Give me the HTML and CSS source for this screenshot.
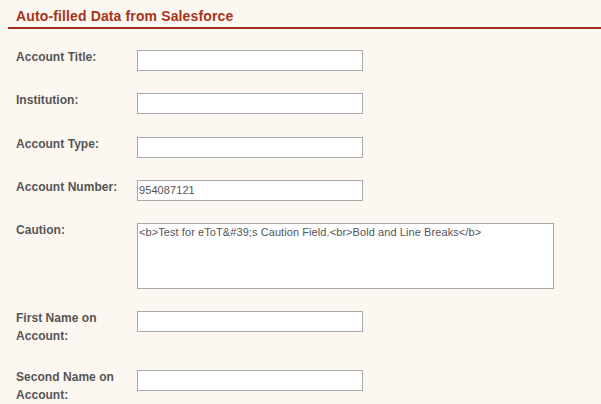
FILE: index.html
```html
<!DOCTYPE html>
<html>
<head>
<meta charset="utf-8">
<link rel="stylesheet" href="styles.css">
</head>
<body>
<div class="section">
  <h2 class="section-title">Auto-filled Data from Salesforce</h2>
  <div class="form">
    <div class="row">
      <label class="label">Account Title:</label>
      <input class="field" type="text" value="">
    </div>
    <div class="row">
      <label class="label">Institution:</label>
      <input class="field" type="text" value="">
    </div>
    <div class="row">
      <label class="label">Account Type:</label>
      <input class="field" type="text" value="">
    </div>
    <div class="row">
      <label class="label">Account Number:</label>
      <input class="field" type="text" value="954087121">
    </div>
    <div class="row">
      <label class="label">Caution:</label>
      <textarea class="area">&lt;b&gt;Test for eToT&amp;#39;s Caution Field.&lt;br&gt;Bold and Line Breaks&lt;/b&gt;</textarea>
    </div>
    <div class="row">
      <label class="label">First Name on Account:</label>
      <input class="field" type="text" value="">
    </div>
    <div class="row">
      <label class="label">Second Name on Account:</label>
      <input class="field" type="text" value="">
    </div>
  </div>
</div>
</body>
</html>
```
FILE: styles.css
```css
html, body {
  margin: 0;
  padding: 0;
  background: #fcf8f1;
  font-family: "Liberation Sans", Arial, sans-serif;
}

.section {
  padding-left: 8px;
}

.section-title {
  margin: 0;
  padding: 8px 0 2px 8px;
  font-size: 14px;
  line-height: 17px;
  font-weight: bold;
  letter-spacing: 0.13px;
  color: #a8341a;
  border-bottom: 2px solid #a32d1f;
}

.form {
  padding: 19px 0 0 8px;
}

.row {
  display: grid;
  grid-template-columns: 121px auto;
  justify-content: start;
  align-items: start;
  padding-bottom: 20.25px;
}

.label {
  font-size: 12px;
  line-height: 18px;
  font-weight: bold;
  letter-spacing: 0.04px;
  color: #555555;
  padding-bottom: 2px;
  padding-right: 6px;
}

.field,
.area {
  box-sizing: border-box;
  margin: 2px 0 0 0;
  border: 1px solid #a9a9a9;
  background: #ffffff;
  font-family: "Liberation Sans", Arial, sans-serif;
  font-size: 11px;
  letter-spacing: 0.08px;
  color: #555555;
  outline: none;
}

.field {
  width: 226px;
  height: 21px;
  padding: 0 1px;
}

.area {
  width: 417px;
  height: 66px;
  padding: 2px 1px;
  resize: none;
  line-height: 13px;
}
```
